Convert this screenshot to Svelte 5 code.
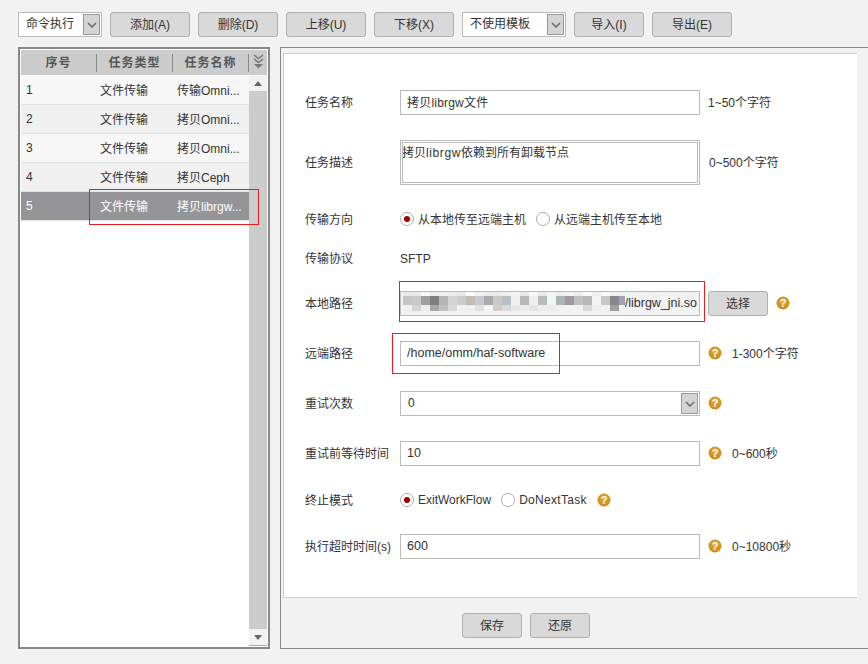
<script>
  // toolbar buttons and table rows
  const actions = ['添加(A)', '删除(D)', '上移(U)', '下移(X)'];
  const tasks = [
    { no: 1, type: '文件传输', name: '传输Omni...' },
    { no: 2, type: '文件传输', name: '拷贝Omni...' },
    { no: 3, type: '文件传输', name: '拷贝Omni...' },
    { no: 4, type: '文件传输', name: '拷贝Ceph' },
    { no: 5, type: '文件传输', name: '拷贝librgw...' }
  ];
  // blurred part of the local path, one colour for each 9px cell
  const blurStrip = ['e8e8e8','e8e8e8','f8f8f8','ececec','f2f2f2','ececec','e8e8e8','fafafa','f2f2f2','ececec','eaeaea','eeeeee','f4f4f4','e8e8ee','f8f8f8','e8e8f0','f4f4f4','ececec','f2f2f2','ececec','f8f8f8','eeeeee','f8f8f8','f2f2f2','f2f2f2'];
  const blurTop = ['c4c4c8','cacaca','a0a0a0','7f7f7f','b4b4b4','d4d4d4','cccccc','c4bab2','c8c8d0','a9a9ae','ccc8c4','b4c0c8','f0f0f2','b8b8b8','eeeef0','b8bcb8','f4f4f4','a9b5b2','a398a0','c0c0c0','b8b8b8','f4f4f4','c8c8c8','888888','a0a4b0'];
  const blurBottom = ['f0f0f0','d4d4d4','ececec','a8a8a8','c0c0c0','d8d8d8','f0f0f0','f0f0f0','e0e0e0','f4f4f4','d4ccca','dcd8dc','e8e8e8','ececec','e4e4e8','ececec','ececec','f0f0f0','f2f2f2','f2f2f2','d8d8d8','eeeeee','f2f2f2','a0a0a0','f2f2f2'];
</script>

{#snippet help()}
  <svg class="help" width="14" height="14" viewBox="0 0 14 14">
    <defs>
      <radialGradient id="gold" cx="0.5" cy="0.4" r="0.6">
        <stop offset="0" stop-color="#e6aa35" />
        <stop offset="1" stop-color="#c98a12" />
      </radialGradient>
    </defs>
    <circle cx="7" cy="7" r="6.5" fill="url(#gold)" />
    <text x="7" y="11" text-anchor="middle" class="help-mark">?</text>
  </svg>
{/snippet}

{#snippet arrow()}
  <span class="sel-btn">
    <svg width="10" height="6" viewBox="0 0 10 6"><path d="M1 1 L5 5 L9 1" fill="none" stroke="#666" stroke-width="1.4" /></svg>
  </span>
{/snippet}

<main>
  <div class="toolbar">
    <div class="select small">命令执行{@render arrow()}</div>
    {#each actions as a}
      <button class="btn wide">{a}</button>
    {/each}
    <div class="select medium">不使用模板{@render arrow()}</div>
    <button class="btn mid">导入(I)</button>
    <button class="btn wide">导出(E)</button>
  </div>

  <div class="content">
    <section class="left">
      <div class="thead">
        <div class="col-no">序号</div>
        <div class="col-type">任务类型</div>
        <div class="col-name">任务名称</div>
        <div class="col-more">
          <svg width="11" height="15" viewBox="0 0 11 15">
            <path d="M1 1 L5.5 4.5 L10 1" fill="none" stroke="#777" stroke-width="1.5" />
            <path d="M1 5 L5.5 8.5 L10 5" fill="none" stroke="#777" stroke-width="1.5" />
            <path d="M1 10 L10 10 L5.5 14.5 Z" fill="#777" />
          </svg>
        </div>
      </div>
      <div class="tbody">
        <div class="rows">
          {#each tasks as t, i}
            <div class="row" class:even={i % 2 === 1} class:active={t.no === 5}>
              <div class="col-no-cell">{t.no}</div>
              <div class="col-type-cell">{t.type}</div>
              <div class="col-name-cell">{t.name}</div>
            </div>
          {/each}
        </div>
        <div class="scrollbar">
          <div class="scroll-btn"><span class="tri up"></span></div>
          <div class="scroll-track"></div>
          <div class="scroll-btn last"><span class="tri down"></span></div>
        </div>
      </div>
    </section>

    <section class="right">
      <div class="form-area">
        <div class="form">
          <div class="field f-name">
            <div class="label">任务名称</div>
            <input class="text name" value="拷贝librgw文件" />
            <span class="hint">1~50个字符</span>
          </div>
          <div class="field f-desc">
            <div class="label">任务描述</div>
            <div class="textarea">拷贝<span class="latin">librgw</span>依赖到所有卸载节点</div>
            <span class="hint wider">0~500个字符</span>
          </div>
          <div class="field f-dir">
            <div class="label">传输方向</div>
            <div class="radios">
              <span class="radio on"></span><span class="r-text cjk">从本地传至远端主机</span>
              <span class="radio"></span><span class="r-text cjk">从远端主机传至本地</span>
            </div>
          </div>
          <div class="field f-proto">
            <div class="label">传输协议</div>
            <div class="plain">SFTP</div>
          </div>
          <div class="field f-local">
            <div class="label">本地路径</div>
            <div class="path">
              <span class="path-value">/librgw_jni.so</span>
              <div class="blur">
                <div class="blur-row strip">
                  {#each blurStrip as c}<i style="background:#{c}"></i>{/each}
                </div>
                <div class="blur-row top">
                  {#each blurTop as c}<i style="background:#{c}"></i>{/each}
                </div>
                <div class="blur-row bottom">
                  {#each blurBottom as c}<i style="background:#{c}"></i>{/each}
                </div>
              </div>
            </div>
            <button class="btn pick">选择</button>
            {@render help()}
          </div>
          <div class="field f-remote">
            <div class="label">远端路径</div>
            <input class="text" value="/home/omm/haf-software" />
            {@render help()}
            <span class="hint after-help">1-300个字符</span>
          </div>
          <div class="field f-retry">
            <div class="label">重试次数</div>
            <div class="select long">0{@render arrow()}</div>
            {@render help()}
          </div>
          <div class="field f-wait">
            <div class="label">重试前等待时间</div>
            <input class="text" value="10" />
            {@render help()}
            <span class="hint after-help">0~600秒</span>
          </div>
          <div class="field f-stop">
            <div class="label">终止模式</div>
            <div class="radios">
              <span class="radio on"></span><span class="r-text">ExitWorkFlow</span>
              <span class="radio"></span><span class="r-text spaced">DoNextTask</span>
              {@render help()}
            </div>
          </div>
          <div class="field f-timeout">
            <div class="label">执行超时时间(s)</div>
            <input class="text" value="600" />
            {@render help()}
            <span class="hint after-help">0~10800秒</span>
          </div>
        </div>
      </div>
      <div class="footer">
        <button class="btn foot">保存</button>
        <button class="btn foot">还原</button>
      </div>
    </section>
  </div>

  <!-- red annotations drawn on top of the screenshot -->
  <div class="mark m1"></div>
  <div class="mark m2"></div>
  <div class="mark m3"></div>
</main>

<style>
  :global(body) {
    margin: 0;
    background: #f2f2f2;
  }

  main {
    position: relative;
    width: 868px;
    height: 664px;
    box-sizing: border-box;
    padding: 12px 0 0 18px;
    overflow: hidden;
    background: #f2f2f2;
    color: #333;
    font-family: "Liberation Sans", "Noto Sans CJK SC", sans-serif;
    font-size: 12px;
  }

  .toolbar {
    display: flex;
    gap: 8px;
    height: 25px;
  }

  .btn {
    box-sizing: border-box;
    height: 25px;
    padding: 0 0 2px;
    border: 1px solid #b0b0b0;
    border-radius: 3px;
    background: #d9d9d9;
    color: #333;
    font: inherit;
  }
  .wide { width: 80px; }
  .mid { width: 70px; }
  .pick { width: 60px; margin-left: 8px; }
  .foot { width: 60px; }

  .select {
    position: relative;
    box-sizing: border-box;
    height: 25px;
    line-height: 23px;
    padding-left: 7px;
    border: 1px solid #bbb;
    background: #fff;
  }
  .select.small { width: 84px; }
  .select.medium { width: 104px; }
  .select.long { width: 300px; }

  .sel-btn {
    position: absolute;
    top: 1px;
    right: 1px;
    box-sizing: border-box;
    width: 17px;
    height: 21px;
    display: flex;
    align-items: center;
    justify-content: center;
    border: 1px solid #999;
    background: #d4d4d4;
  }

  .content {
    display: flex;
    gap: 10px;
    margin-top: 10px;
    height: 602px;
  }

  .left {
    box-sizing: border-box;
    width: 252px;
    padding: 1px;
    border: 2px solid #888;
    background: #fff;
    display: flex;
    flex-direction: column;
  }

  .thead {
    display: flex;
    align-items: center;
    height: 25px;
    flex: none;
    background: #cccccc;
    font-weight: bold;
    color: #555;
    letter-spacing: 1px;
    text-align: center;
  }
  .thead > div {
    box-sizing: border-box;
    height: 18px;
    line-height: 18px;
    border-right: 1px solid #888;
  }
  .col-no { width: 76px; }
  .col-type { width: 76px; }
  .col-name { width: 76px; }
  .col-more {
    flex: 1;
    border-right: none !important;
  }

  .tbody {
    flex: 1;
    display: flex;
    min-height: 0;
  }
  .rows {
    flex: 1;
    padding-top: 1px;
  }
  .row {
    display: flex;
    align-items: center;
    box-sizing: border-box;
    height: 29px;
    border-bottom: 1px solid #e2e2e2;
    background: #f7f7f7;
  }
  .row.even { background: #f0f0f0; }
  .row.active {
    background: #959598;
    color: #fff;
  }
  .col-no-cell { width: 79px; padding-left: 5px; box-sizing: border-box; }
  .col-type-cell { width: 77px; padding-bottom: 2px; }
  .col-name-cell { flex: 1; white-space: nowrap; padding-bottom: 2px; }

  .scrollbar {
    width: 18px;
    display: flex;
    flex-direction: column;
    background: #ccc;
  }
  .scroll-btn {
    box-sizing: border-box;
    height: 16px;
    background: #f2f2f2;
    display: flex;
    align-items: center;
    justify-content: center;
  }
  .scroll-btn.last { border-bottom: 1px solid #aaa; height: 17px; }
  .scroll-track { flex: 1; }
  .tri {
    width: 0;
    height: 0;
    border-left: 4px solid transparent;
    border-right: 4px solid transparent;
  }
  .tri.up { border-bottom: 5px solid #666; }
  .tri.down { border-top: 5px solid #666; }

  .right {
    flex: 1;
    border: solid #888;
    border-width: 1px 0 1px 1px;
    display: flex;
    flex-direction: column;
    min-width: 0;
  }
  .form-area {
    box-sizing: border-box;
    height: 545px;
    margin: 5px 11px 0 2px;
    border-top: 1px solid #ccc;
    border-bottom: 1px solid #ccc;
    border-left: 1px solid #ccc;
    background: #fff;
  }
  .form {
    padding-top: 36px;
    padding-left: 21px;
  }
  .field {
    display: flex;
    align-items: center;
  }
  .label {
    width: 95px;
    flex: none;
    white-space: nowrap;
    padding-bottom: 2px;
  }
  .text {
    box-sizing: border-box;
    width: 300px;
    height: 25px;
    padding: 0 6px 2px;
    border: 1px solid #bbb;
    background: #fff;
    color: #333;
    font: inherit;
    font-size: 12.5px;
    outline: none;
  }
  .text.name {
    font-size: 12px;
    letter-spacing: 0.2px;
  }
  .hint { margin-left: 8px; padding-bottom: 2px; }
  .hint.wider { margin-left: 9px; }
  .hint.after-help { margin-left: 10px; }
  .help { margin: 0 0 1px 8px; flex: none; }
  .help-mark {
    fill: #fff;
    font-size: 11px;
    font-weight: bold;
  }

  .f-desc { margin-top: 25px; }
  .textarea {
    box-sizing: border-box;
    width: 300px;
    height: 45px;
    padding: 5px 1px 0;
    border: 1px solid #bbb;
    outline: 1px solid #bbb;
    outline-offset: -3px;
    background: #fff;
    line-height: 15px;
  }
  .latin { letter-spacing: 0.6px; }
  .f-dir { margin-top: 25px; height: 18px; }
  .f-proto { margin-top: 21px; height: 18px; }
  .f-local { margin-top: 24px; }
  .f-remote { margin-top: 25px; }
  .f-retry { margin-top: 25px; }
  .f-wait { margin-top: 25px; }
  .f-stop { margin-top: 25px; height: 18px; }
  .f-timeout { margin-top: 25px; }

  .radios {
    display: flex;
    align-items: center;
  }
  .radio {
    box-sizing: border-box;
    width: 14px;
    height: 14px;
    border: 1px solid #aaa;
    border-radius: 50%;
    background: #fff;
    display: inline-flex;
    align-items: center;
    justify-content: center;
  }
  .radio.on::after {
    content: '';
    width: 6px;
    height: 6px;
    border-radius: 50%;
    background: #a00000;
  }
  .r-text { margin: 0 10px 0 4px; }
  .r-text.cjk { padding-bottom: 2px; }
  .r-text.spaced { letter-spacing: 0.3px; }
  .f-stop .help { margin-left: 0; }

  .plain { font-size: 12px; padding-top: 1px; }

  .path {
    position: relative;
    box-sizing: border-box;
    width: 300px;
    height: 25px;
    border: 1px solid #bbb;
    background: #f2f2f2;
    font-size: 12.5px;
    line-height: 23px;
    text-align: right;
    padding-right: 2px;
  }
  .blur {
    position: absolute;
    left: 2px;
    top: 0;
    width: 222px;
    overflow: hidden;
  }
  .blur-row { display: flex; }
  .blur-row i { display: block; flex: none; width: 9px; }
  .blur-row.strip i { height: 4px; }
  .blur-row.top i { height: 9px; }
  .blur-row.bottom i { height: 6px; }

  .footer {
    display: flex;
    gap: 8px;
    padding: 15px 0 0 181px;
  }

  .mark {
    position: absolute;
    box-sizing: border-box;
    border: 1px solid #ed1c24;
  }
  .m1 { left: 89px; top: 189px; width: 170px; height: 36px; }
  .m2 { left: 399px; top: 281px; width: 306px; height: 41px; }
  .m3 { left: 392px; top: 333px; width: 168px; height: 41px; }
</style>
